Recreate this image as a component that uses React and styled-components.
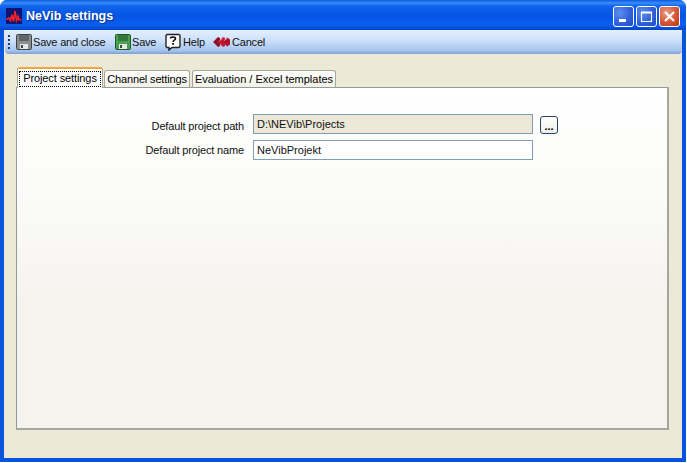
import React from "react";
import styled, { createGlobalStyle } from "styled-components";

const Global = createGlobalStyle`
    html, body { margin: 0; padding: 0; background: #fff; }
    body { font-family: "Liberation Sans", Arial, sans-serif; font-size: 11px; color: #000; }
`;

const Window = styled.div`
    width: 686px;
    height: 462px;
    box-sizing: border-box;
    display: flex;
    flex-direction: column;
    background: #0855dd;
    border-radius: 7px 7px 0 0;
    overflow: hidden;
`;

const TitleBar = styled.div`
    height: 30px;
    flex: none;
    box-sizing: border-box;
    padding: 2px 5px 0 6px;
    display: flex;
    align-items: center;
    gap: 4px;
    background: linear-gradient(180deg, #0a5ae0 0, #3b8cf7 3px, #0f64ec 6px, #0554e3 16px, #0a5ff0 25px, #0443c8 30px);
`;

const Title = styled.div`
    flex: 1;
    color: #fff;
    font: bold 12.5px "Liberation Sans", Arial, sans-serif;
    letter-spacing: 0.05px;
    text-shadow: 1px 1px 1px #0a2f90;
`;

const CaptionButtons = styled.div`
    display: flex;
    gap: 2px;
    margin-right: 1px;
`;

const CaptionButton = styled.div`
    width: 21px;
    height: 21px;
    box-sizing: border-box;
    border: 1px solid #fff;
    border-radius: 3px;
    display: flex;
    align-items: center;
    justify-content: center;
    background: ${props => props.$close
        ? "radial-gradient(circle at 35% 30%, #e9a088 0, #d9593a 50%, #b93a1c 100%)"
        : "radial-gradient(circle at 30% 30%, #5f8ff0 0, #2f62dc 55%, #2049c4 100%)"};
`;

const Body = styled.div`
    flex: 1;
    min-height: 0;
    margin: 0 4px 4px;
    display: flex;
    flex-direction: column;
    background: #ece9d8;
`;

const Toolbar = styled.div`
    height: 24px;
    flex: none;
    box-sizing: border-box;
    padding-left: 3px;
    display: flex;
    align-items: center;
    background: linear-gradient(180deg, #e3effd 0, #cfe2fa 40%, #a8c6ef 85%, #7f9fd0 100%);
    border-radius: 0 0 4px 4px;
    margin: 0 0 0 1px;
`;

const Grip = styled.div`
    width: 2px;
    height: 15px;
    margin-right: 6px;
    background: repeating-linear-gradient(180deg, #1c3c78 0 2px, transparent 2px 4px);
`;

const ToolButton = styled.div`
    display: flex;
    align-items: center;
    gap: 1px;
    width: ${props => props.$width}px;
    flex: none;
    color: #111;
    letter-spacing: -0.2px;
    white-space: nowrap;
`;

const Content = styled.div`
    flex: 1;
    min-height: 0;
    padding: 13px 13px 28px 12px;
    display: flex;
    flex-direction: column;
`;

const TabStrip = styled.div`
    height: 21px;
    flex: none;
    padding-left: 1px;
    display: flex;
    align-items: flex-end;
    position: relative;
    z-index: 1;
    margin-bottom: -1px;
`;

const Tab = styled.div`
    height: ${props => props.$active ? 21 : 18}px;
    box-sizing: border-box;
    width: ${props => props.$width}px;
    margin-right: ${props => props.$gap}px;
    display: flex;
    align-items: center;
    justify-content: center;
    border: 1px solid #a5a697;
    border-bottom: ${props => props.$active ? "0" : "1px solid #919b9c"};
    border-top: ${props => props.$active ? "2px solid #f1a83a" : "1px solid #a5a697"};
    border-radius: 3px 3px 0 0;
    background: ${props => props.$active ? "#fff" : "linear-gradient(180deg, #fff, #f3f1e6)"};
    letter-spacing: ${props => props.$tracking || 0}px;
    white-space: nowrap;
`;

const FocusLabel = styled.span`
    outline: 1px dotted #000;
    padding: 0 3px 1px 3px;
    line-height: 13px;
    letter-spacing: -0.1px;
`;

const Panel = styled.div`
    flex: 1;
    min-height: 0;
    box-sizing: border-box;
    border: 1px solid #919b9c;
    border-right: 2px solid #a5a79c;
    border-bottom: 2px solid #a5a79c;
    background: linear-gradient(180deg, #fff 0, #fbfbf9 30%, #f5f3ee 65%, #f5f3ee 100%);
    padding: 26px 0 0 0;
    display: grid;
    grid-template-columns: 227px 279px auto;
    grid-auto-rows: 20px;
    row-gap: 6px;
    align-items: center;
`;

const Label = styled.div`
    text-align: right;
    color: #111;
    letter-spacing: -0.15px;
    margin-top: ${props => props.$drop || 0}px;
`;

const Field = styled.div`
    height: 20px;
    box-sizing: border-box;
    margin-left: 9px;
    width: 280px;
    border: 1px solid #7f9db9;
    padding-left: 3px;
    display: flex;
    align-items: center;
    color: #111;
    background: ${props => props.$readOnly ? "#ebe8d8" : "#fff"};
`;

const BrowseButton = styled.div`
    width: 18px;
    height: 18px;
    margin: 2px 0 0 17px;
    box-sizing: border-box;
    border: 1px solid #25446b;
    border-radius: 3px;
    background: linear-gradient(180deg, #fff, #f0efe6);
    display: flex;
    align-items: flex-end;
    justify-content: center;
    font: bold 11px "Liberation Sans", Arial, sans-serif;
    line-height: 14px;
`;

const Floppy = ({ body, dark }) => (
    <svg width="16" height="16" viewBox="0 0 16 16">
        <rect x="0.5" y="0.5" width="15" height="15" rx="1" fill={body} stroke={dark} />
        <rect x="3" y="1" width="10" height="6" fill={dark} opacity="0.55" />
        <rect x="4" y="10" width="8" height="5" fill="#e6e6e6" />
        <rect x="5" y="11" width="2" height="3" fill={dark} />
    </svg>
);

const HelpIcon = () => (
    <svg width="17" height="18" viewBox="0 0 17 18">
        <path d="M2 1.500h12l1 1v11l-1 1H7l-3 2.500v-2.500H2l-1-1v-11z" fill="#fff" stroke="#222" strokeWidth="1.400" />
        <path d="M5.500 5.500c0-2 5-2 5 0 0 1.600-2.400 1.600-2.400 3.400" fill="none" stroke="#111" strokeWidth="1.600" />
        <rect x="7.200" y="10" width="1.800" height="1.800" fill="#111" />
    </svg>
);

const CancelIcon = () => (
    <svg width="18" height="12" viewBox="0 0 18 12">
        <path d="M0 6l5-5 2 1v8l-2 1z" fill="#8e1029" />
        <path d="M5 6l5-5 2 1v8l-2 1z" fill="#c2183a" />
        <path d="M10 6l4-4.500 3 2v5l-3 2z" fill="#b0122e" />
        <path d="M6.500 4.500l3-2M11 4.500l3-2" stroke="#f49aa8" strokeWidth="1" />
    </svg>
);

const LogoIcon = () => (
    <svg width="16" height="16" viewBox="0 0 16 16">
        <rect width="16" height="16" fill="#0b1470" />
        <path d="M0 11.500 3 10l1.500 2.500L6 7l1.500 6.500L9 3l1.500 9.500 1.500-4 1 3.500 2.500-.5" fill="none" stroke="#f0202a" strokeWidth="1.700" />
    </svg>
);

const App = () => (
    <>
        <Global />
        <Window>
            <TitleBar>
                <LogoIcon />
                <Title>NeVib settings</Title>
                <CaptionButtons>
                    <CaptionButton>
                        <svg width="13" height="13" viewBox="0 0 13 13"><rect x="2" y="9" width="7" height="3" fill="#fff" /></svg>
                    </CaptionButton>
                    <CaptionButton>
                        <svg width="13" height="13" viewBox="0 0 13 13"><path d="M1.500 2.500h10v9h-10z" fill="none" stroke="#fff" strokeWidth="1.200" /><rect x="1" y="1.500" width="11" height="2" fill="#fff" /></svg>
                    </CaptionButton>
                    <CaptionButton $close>
                        <svg width="13" height="13" viewBox="0 0 13 13"><path d="M2 2l9 9M11 2l-9 9" stroke="#fff" strokeWidth="2.200" /></svg>
                    </CaptionButton>
                </CaptionButtons>
            </TitleBar>
            <Body>
                <Toolbar>
                    <Grip />
                    <ToolButton $width={99}><Floppy body="#8a8f92" dark="#3c4248" />Save and close</ToolButton>
                    <ToolButton $width={50}><Floppy body="#4aa050" dark="#1e5a2a" />Save</ToolButton>
                    <ToolButton $width={48}><HelpIcon />Help</ToolButton>
                    <ToolButton $width={60}><CancelIcon />Cancel</ToolButton>
                </Toolbar>
                <Content>
                    <TabStrip>
                        <Tab $active $width={86} $gap={1}><FocusLabel>Project settings</FocusLabel></Tab>
                        <Tab $width={86} $gap={2} $tracking={-0.15}>Channel settings</Tab>
                        <Tab $width={144} $gap={0}>Evaluation / Excel templates</Tab>
                    </TabStrip>
                    <Panel>
                        <Label $drop={3}>Default project path</Label>
                        <Field $readOnly>D:\NEVib\Projects</Field>
                        <BrowseButton>...</BrowseButton>
                        <Label>Default project name</Label>
                        <Field>NeVibProjekt</Field>
                    </Panel>
                </Content>
            </Body>
        </Window>
    </>
);

export default App;
